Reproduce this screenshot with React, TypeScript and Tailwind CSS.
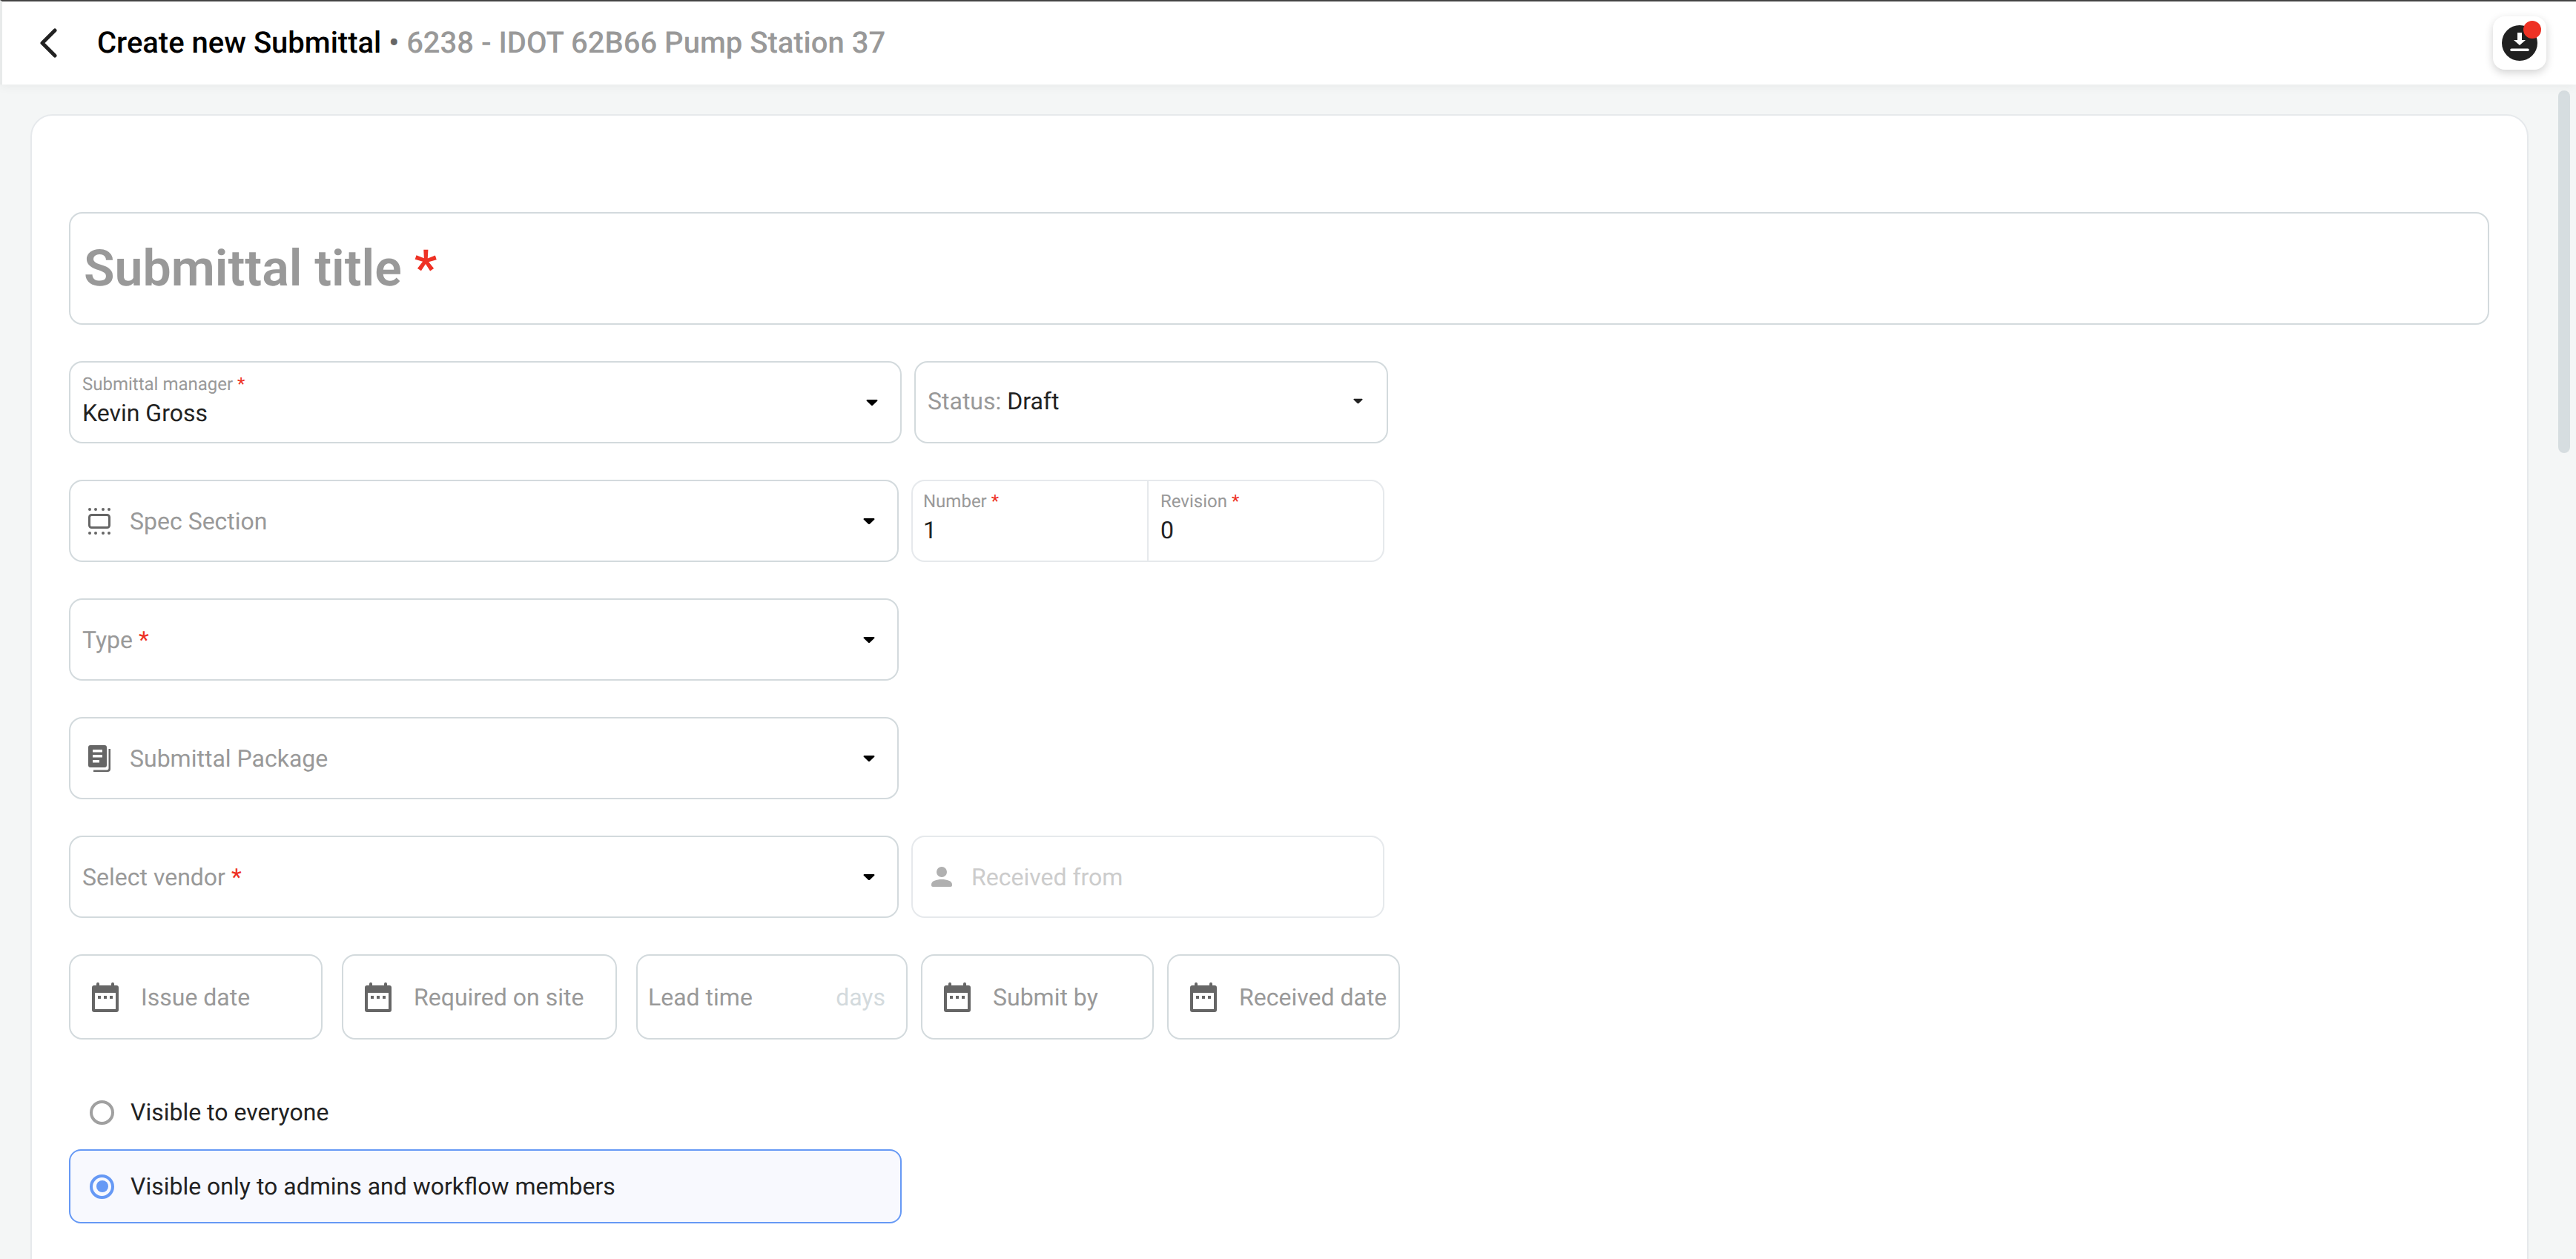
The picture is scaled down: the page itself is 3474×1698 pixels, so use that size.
import { ReactNode } from "react";

const Star = () => <span className="text-[#ee3124]"> *</span>;

function Caret({ small }: { small?: boolean }) {
  return (
    <svg viewBox="0 0 10 6" className={small ? "w-[13px] h-[8px] fill-[#222]" : "w-[16px] h-[10px] fill-black"}>
      <path d="M1 0.5h8c.6 0 .9.7.5 1.1L5.6 5.300c-.3.3-.9.3-1.200 0L.5 1.600C.1 1.200.4.5 1 .5z" />
    </svg>
  );
}

function CalendarIcon() {
  return (
    <svg viewBox="0 0 36 40" className="w-[36px] h-[40px] shrink-0 fill-[#666]">
      <rect x="6" y="0" width="4" height="8" rx="2" />
      <rect x="26" y="0" width="4" height="8" rx="2" />
      <path fillRule="evenodd" d="M3 4h30a3 3 0 0 1 3 3v30a3 3 0 0 1-3 3H3a3 3 0 0 1-3-3V7a3 3 0 0 1 3-3zM4 14v22h28V14z" />
      <rect x="8" y="18" width="4" height="4" />
      <rect x="16" y="18" width="4" height="4" />
      <rect x="24" y="18" width="4" height="4" />
    </svg>
  );
}

function SpecIcon() {
  return (
    <svg viewBox="0 0 30 36" className="w-[30px] h-[36px] fill-[#666]">
      {[2, 10, 20, 28].map((x) => (
        <g key={x}>
          <circle cx={x} cy="2" r="2" />
          <circle cx={x} cy="34" r="2" />
        </g>
      ))}
      <rect x="1.500" y="9.500" width="27" height="17" rx="3" fill="none" stroke="#666" strokeWidth="3" />
    </svg>
  );
}

function PackageIcon() {
  return (
    <svg viewBox="0 0 30 36" className="w-[30px] h-[36px] fill-[#666]">
      <path fillRule="evenodd" d="M3 0h19a3 3 0 0 1 3 3v24a3 3 0 0 1-3 3H3a3 3 0 0 1-3-3V3a3 3 0 0 1 3-3zM6 6v3.500h13V6zM6 13v3.500h13V13zM6 20v3.500h9V20z" />
      <path d="M27.500 5H30v27a4 4 0 0 1-4 4H7v-2.500h18a2.500 2.500 0 0 0 2.500-2.500z" />
    </svg>
  );
}

function Field({
  w,
  mute,
  children,
}: {
  w: string;
  mute?: boolean;
  children: ReactNode;
}) {
  return (
    <div
      className={`${w} h-[111px] shrink-0 rounded-[18px] border-2 bg-white flex items-center ${
        mute ? "border-[#e6e9ec]" : "border-[#d3dadd]"
      }`}
    >
      {children}
    </div>
  );
}

function SelectRow({ icon, label, required }: { icon?: ReactNode; label: string; required?: boolean }) {
  return (
    <Field w="w-[1119px]">
      <div className="flex-1 flex items-center pl-[16px] pr-[30px]">
        {icon && <div className="w-[46px] pl-[8px] mr-[18px] flex items-center">{icon}</div>}
        <span className="text-[32px] text-[#999]">
          {label}
          {required && <Star />}
        </span>
        <div className="ml-auto">
          <Caret />
        </div>
      </div>
    </Field>
  );
}

function DateField({ w, label }: { w: string; label: string }) {
  return (
    <div className={`${w} h-[115px] shrink-0 rounded-[18px] border-2 border-[#d3dadd] flex items-center pl-[29px] gap-[30px]`}>
      <CalendarIcon />
      <span className="text-[32px] text-[#999] whitespace-nowrap">{label}</span>
    </div>
  );
}

export default function App() {
  return (
    <div className="w-[3474px] h-[1698px] overflow-hidden bg-[#f4f6f6] font-['Roboto',sans-serif] [text-rendering:geometricPrecision] flex flex-col">
      {/* top bar */}
      <div className="h-[114px] shrink-0 border-t-2 border-t-[#444] border-l-[3px] border-l-[#e8eaea] bg-white flex items-center pl-[50px] pr-[40px] shadow-[0_2px_14px_rgba(0,0,0,0.06)] relative">
        <svg viewBox="0 0 24 40" className="w-[24px] h-[40px] fill-none stroke-[#222] stroke-[5] [stroke-linecap:round] [stroke-linejoin:round]">
          <path d="M21 3 4 20l17 17" />
        </svg>
        <div className="ml-[54px] text-[40px] font-medium text-black whitespace-nowrap">
          Create new Submittal <span className="text-[#999]"><span className="text-[#666]">•</span> 6238 - IDOT 62B66 Pump Station 37</span>
        </div>
        <div className="ml-auto w-[72px] h-[72px] rounded-[16px] bg-white shadow-[0_4px_12px_rgba(0,0,0,0.18)] flex items-center justify-center relative">
          <svg viewBox="0 0 48 48" className="w-[48px] h-[48px]">
            <circle cx="24" cy="24" r="24" fill="#212121" />
            <path fill="#fff" d="M21 10h6v10h5l-8 7-8-7h5zM13 31.500h22a1.800 1.800 0 0 1 0 3.600H13a1.800 1.800 0 0 1 0-3.600z" />
          </svg>
          <div className="absolute top-[6px] right-[7px] w-[24px] h-[24px] rounded-full bg-[#ee3124]" />
        </div>
      </div>

      {/* scroll area */}
      <div className="flex-1 flex min-h-0 pl-[41px] pt-[40px]">
        <div className="w-[3369px] h-[1700px] shrink-0 rounded-[30px] border-2 border-[#e6e9ec] bg-white pl-[50px] pr-[51px] pt-[130px]">
          <div className="h-[152px] rounded-[18px] border-2 border-[#d3dadd] flex items-center pl-[18px] text-[68px] leading-none font-semibold text-[#999]">
            <span>
              Submittal title<Star />
            </span>
          </div>

          <div className="mt-[49px] flex gap-[17px]">
            <Field w="w-[1123px]">
              <div className="flex-1 flex items-center pl-[16px] pr-[30px]">
                <div className="flex flex-col pb-[4px]">
                  <span className="text-[24px] leading-[32px] text-[#999]">
                    Submittal manager
                    <Star />
                  </span>
                  <span className="text-[32px] leading-[46px] text-[#222]">Kevin Gross</span>
                </div>
                <div className="ml-auto">
                  <Caret />
                </div>
              </div>
            </Field>
            <Field w="w-[639px]">
              <div className="flex-1 flex items-center pl-[16px] pr-[32px] pb-[3px]">
                <span className="text-[32px] text-[#999]">
                  Status: <span className="text-[#222]">Draft</span>
                </span>
                <div className="ml-auto">
                  <Caret small />
                </div>
              </div>
            </Field>
          </div>

          <div className="mt-[49px] flex gap-[17px]">
            <SelectRow label="Spec Section" icon={<SpecIcon />} />
            <Field w="w-[638px]" mute>
              <div className="w-[318px] h-full border-r-2 border-[#e6e9ec] pl-[14px] pb-[8px] flex flex-col justify-center">
                <span className="text-[24px] leading-[32px] text-[#999]">
                  Number
                  <Star />
                </span>
                <span className="text-[32px] leading-[46px] text-[#222]">1</span>
              </div>
              <div className="flex-1 pl-[16px] pb-[8px] flex flex-col justify-center">
                <span className="text-[24px] leading-[32px] text-[#999]">
                  Revision
                  <Star />
                </span>
                <span className="text-[32px] leading-[46px] text-[#222]">0</span>
              </div>
            </Field>
          </div>

          <div className="mt-[49px]">
            <SelectRow label="Type" required />
          </div>
          <div className="mt-[49px]">
            <SelectRow label="Submittal Package" icon={<PackageIcon />} />
          </div>

          <div className="mt-[49px] flex gap-[17px]">
            <SelectRow label="Select vendor" required />
            <Field w="w-[638px]" mute>
              <div className="flex items-center pl-[25px] gap-[26px]">
                <svg viewBox="0 0 28 28" className="w-[28px] h-[28px] fill-[#b0b0b0]">
                  <circle cx="14" cy="7" r="7" />
                  <path d="M0 24c0-5 7-7 14-7s14 2 14 7v1c0 1-1 2-2 2H2c-1 0-2-1-2-2z" />
                </svg>
                <span className="text-[32px] text-[#ccc]">Received from</span>
              </div>
            </Field>
          </div>

          <div className="mt-[49px] flex gap-[18px] items-center">
            <DateField w="w-[342px] mr-[8px]" label="Issue date" />
            <DateField w="w-[371px] mr-[8px]" label="Required on site" />
            <div className="w-[366px] h-[115px] shrink-0 rounded-[18px] border-2 border-[#d3dadd] flex items-center justify-between pl-[14px] pr-[28px]">
              <span className="text-[32px] text-[#999]">Lead time</span>
              <span className="text-[32px] text-[#d3dadd]">days</span>
            </div>
            <DateField w="w-[314px]" label="Submit by" />
            <DateField w="w-[314px]" label="Received date" />
          </div>

          <div className="mt-[68px] flex items-center h-[60px] pl-[28px] gap-[22px]">
            <div className="w-[33px] h-[33px] rounded-full border-[4px] border-[#a0a0a0]" />
            <span className="text-[32px] text-[#222]">Visible to everyone</span>
          </div>
          <div className="mt-[20px] w-[1123px] h-[100px] rounded-[16px] border-2 border-[#6699f5] bg-[#f8f9fe] flex items-center pl-[26px] gap-[22px]">
            <div className="w-[33px] h-[33px] rounded-full border-[4px] border-[#6699f5] flex items-center justify-center">
              <div className="w-[16px] h-[16px] rounded-full bg-[#6699f5]" />
            </div>
            <span className="text-[32px] text-[#222]">Visible only to admins and workflow members</span>
          </div>
        </div>
        <div className="w-[16px] h-[489px] mt-[-32px] ml-[40px] rounded-full bg-[#d6dde0] shrink-0" />
      </div>
    </div>
  );
}
